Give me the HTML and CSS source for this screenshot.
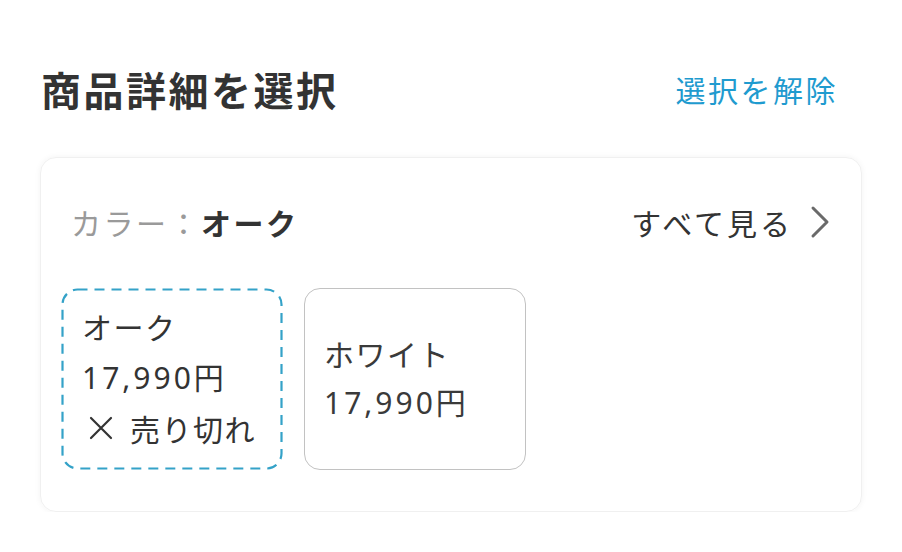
FILE: index.html
```html
<!DOCTYPE html>
<html lang="ja">
<head>
<meta charset="utf-8">
<link rel="stylesheet" href="styles.css">
</head>
<body>
<div class="page">
  <div class="title-row">
    <h1 class="title">商品詳細を選択</h1>
    <a class="clear">選択を解除</a>
  </div>
  <div class="card">
    <div class="card-head">
      <div class="label"><span class="label-key">カラー：</span><span class="label-val">オーク</span></div>
      <div class="see-all">すべて見る
        <svg class="chev" width="22" height="34" viewBox="0 0 22 34"><polyline points="4,3 18,17 4,31" fill="none" stroke="#6a6a6a" stroke-width="3" stroke-linecap="round" stroke-linejoin="round"/></svg>
      </div>
    </div>
    <div class="options">
      <div class="option option-selected">
        <svg class="dash" width="222" height="182" viewBox="0 0 222 182"><rect x="1.5" y="1.5" width="219" height="179" rx="15" fill="none" stroke="#34a2c8" stroke-width="2.2" stroke-dasharray="10 7"/></svg>
        <div class="opt-line">オーク</div>
        <div class="opt-line"><span class="num">17,990</span>円</div>
        <div class="opt-line sold"><svg class="x" width="26" height="26" viewBox="0 0 26 26"><path d="M3 3L23 23M23 3L3 23" stroke="#333" stroke-width="2.2" stroke-linecap="round"/></svg>売り切れ</div>
      </div>
      <div class="option option-plain">
        <div class="opt-line">ホワイト</div>
        <div class="opt-line"><span class="num">17,990</span>円</div>
      </div>
    </div>
  </div>
</div>
</body>
</html>
```
FILE: styles.css
```css
html, body {
  margin: 0;
  padding: 0;
  background: #ffffff;
}
body {
  font-family: "Noto Sans CJK JP", "Noto Sans", sans-serif;
  color: #333333;
}
.page {
  width: 902px;
  box-sizing: border-box;
  padding: 64px 40px 0 40px;
}
.title-row {
  display: flex;
  justify-content: space-between;
  align-items: center;
  height: 50px;
  padding: 0 24px 0 1px;
}
.title {
  margin: 0;
  font-size: 40px;
  line-height: 50px;
  font-weight: 700;
  letter-spacing: 2.5px;
  color: #333333;
}
.clear {
  font-size: 30px;
  line-height: 40px;
  letter-spacing: 2.5px;
  color: #1f9bcf;
}
.card {
  margin-top: 43px;
  width: 822px;
  box-sizing: border-box;
  border: 1px solid #f0f0f0;
  border-radius: 16px;
  box-shadow: 0 0 6px rgba(0, 0, 0, 0.05);
  padding: 39px 20px 41px 20px;
}
.card-head {
  display: flex;
  justify-content: space-between;
  align-items: center;
  height: 50px;
  padding: 0 12px 0 10px;
}
.label {
  font-size: 30px;
  line-height: 40px;
  letter-spacing: 2.5px;
}
.label-key {
  color: #9a9a9a;
}
.label-val {
  color: #333333;
  font-weight: 700;
}
.see-all {
  display: flex;
  align-items: center;
  font-size: 30px;
  line-height: 40px;
  color: #333333;
  letter-spacing: 3px;
}
.chev {
  margin-left: 16px;
  margin-right: -2px;
}
.options {
  display: flex;
  gap: 21px;
  margin-top: 41px;
}
.option {
  position: relative;
  width: 222px;
  height: 182px;
  box-sizing: border-box;
  display: flex;
  flex-direction: column;
  justify-content: center;
  padding-left: 21px;
  padding-bottom: 4px;
}
.option-plain {
  border: 1.5px solid #c2c2c2;
  border-radius: 16px;
  padding-left: 19px;
  padding-bottom: 3px;
}
.dash {
  position: absolute;
  left: 0;
  top: 0;
}
.opt-line {
  font-size: 30px;
  line-height: 50px;
  color: #333333;
  letter-spacing: 1.5px;
  white-space: nowrap;
}
.num {
  font-family: "Noto Sans", "Noto Sans CJK JP", sans-serif;
  letter-spacing: 3px;
}
.option-plain .opt-line {
  line-height: 48px;
  color: #3a3a3a;
}
.sold {
  display: flex;
  align-items: center;
}
.x {
  margin-left: 6px;
  margin-right: 16px;
}
```
